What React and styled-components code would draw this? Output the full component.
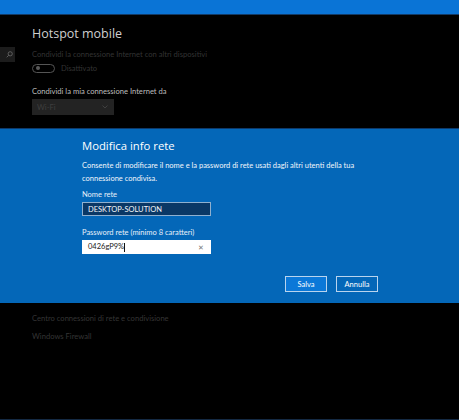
import React from "react";
import styled, { createGlobalStyle } from "styled-components";

const Globale = createGlobalStyle`
  html, body {
    margin: 0;
    padding: 0;
    background: #000000;
  }
  body {
    font-family: "Lato", "Open Sans", sans-serif;
  }
`;

const Pagina = styled.div`
  width: 459px;
  height: 420px;
  background: #000000;
  display: flex;
  flex-direction: column;
  overflow: hidden;
`;

const BarraSuperiore = styled.div`
  height: 14px;
  background: #0a74d6;
  border-bottom: 1px solid #123a66;
  flex-shrink: 0;
`;

const Impostazioni = styled.div`
  display: flex;
  height: 113px;
  flex-shrink: 0;
`;

const Laterale = styled.div`
  width: 32px;
  padding-top: 32px;
`;

const Ricerca = styled.div`
  width: 15px;
  height: 15px;
  background: #1c1c1c;
  display: flex;
  align-items: center;
  justify-content: flex-end;
  padding-right: 2px;
  box-sizing: border-box;
`;

const Principale = styled.div`
  display: flex;
  flex-direction: column;
`;

const Titolo = styled.h1`
  margin: 10px 0 0;
  font-family: "Open Sans", sans-serif;
  font-size: 12.5px;
  font-weight: 400;
  color: #cfcfcf;
  line-height: 17px;
`;

const Etichetta = styled.div`
  font-size: 7.6px;
  line-height: 10px;
  color: ${(p) => (p.$chiara ? "#bdbdbd" : "#333333")};
  margin-top: ${(p) => p.$sopra || 0}px;
`;

const RigaInterruttore = styled.div`
  display: flex;
  align-items: center;
  gap: 6px;
  margin-top: 4px;
`;

const Interruttore = styled.div`
  width: 18px;
  height: 7px;
  border: 1px solid #555555;
  border-radius: 5px;
  display: flex;
  align-items: center;
  padding-left: 3px;
  box-sizing: content-box;

  &::before {
    content: "";
    width: 4px;
    height: 4px;
    border-radius: 50%;
    background: #5a5a5a;
  }
`;

const Selettore = styled.div`
  width: 82px;
  height: 16px;
  margin-top: 3px;
  background: #232323;
  display: flex;
  align-items: center;
  justify-content: space-between;
  padding: 0 6px 0 5px;
  box-sizing: border-box;
  font-size: 7.6px;
  color: #3e3e3e;
`;

const Finestra = styled.div`
  height: 175px;
  background: #0467b8;
  border-top: 1px solid #0d3a6c;
  flex-shrink: 0;
  padding-left: 82px;
  box-sizing: border-box;
  display: flex;
  flex-direction: column;
`;

const TitoloFinestra = styled.h2`
  margin: 9px 0 0;
  font-family: "Open Sans", sans-serif;
  font-size: 11.3px;
  font-weight: 400;
  color: #ffffff;
  line-height: 16px;
`;

const Descrizione = styled.p`
  margin: 5px 0 0;
  width: 275px;
  font-size: 7.5px;
  line-height: 13px;
  color: #f2f6fb;
`;

const Campo = styled.div`
  margin-top: ${(p) => p.$sopra}px;
  display: flex;
  flex-direction: column;
  gap: 2px;
`;

const NomeCampo = styled.label`
  font-size: 7.5px;
  line-height: 10px;
  color: #e8f0f8;
`;

const Casella = styled.div`
  width: 129px;
  height: 14px;
  box-sizing: border-box;
  display: flex;
  align-items: center;
  justify-content: space-between;
  padding: 0 6px 0 5px;
  font-size: 7.5px;
  background: ${(p) => (p.$chiara ? "#ffffff" : "#0a3866")};
  color: ${(p) => (p.$chiara ? "#1a1a1a" : "#f4f7fb")};
  border: 1px solid ${(p) => (p.$chiara ? "#ffffff" : "#8fb0cf")};
`;

const Cursore = styled.span`
  display: inline-block;
  width: 1px;
  height: 9px;
  background: #111111;
  vertical-align: middle;
`;

const Chiudi = styled.span`
  color: #777777;
  font-size: 7px;
`;

const Pulsanti = styled.div`
  display: flex;
  gap: 9px;
  margin-top: 22px;
  margin-left: 203px;
`;

const Pulsante = styled.button`
  width: 42px;
  height: 16px;
  padding: 0;
  font-family: inherit;
  font-size: 7.5px;
  color: #ffffff;
  background: ${(p) => (p.$primario ? "#0b78d8" : "transparent")};
  border: 1px solid #b9d4ee;
`;

const Collegamenti = styled.div`
  display: flex;
  flex-direction: column;
  gap: 8px;
  padding: 10px 0 0 32px;
  flex: 1;
  border-bottom: 1px solid #142a44;
`;

const Collegamento = styled.div`
  font-size: 7.6px;
  line-height: 10px;
  color: #353535;
`;

function IconaRicerca() {
  return (
    <svg width="7" height="7" viewBox="0 0 10 10" fill="none">
      <circle cx="6" cy="4" r="3" stroke="#6a6a6a" strokeWidth="1.2" />
      <line x1="3.8" y1="6.2" x2="1" y2="9" stroke="#6a6a6a" strokeWidth="1.2" />
    </svg>
  );
}

function Freccia() {
  return (
    <svg width="6" height="4" viewBox="0 0 6 4" fill="none">
      <polyline points="0.5,0.5 3,3 5.5,0.5" stroke="#444444" strokeWidth="0.9" />
    </svg>
  );
}

export default function App() {
  return (
    <Pagina>
      <Globale />
      <BarraSuperiore />
      <Impostazioni>
        <Laterale>
          <Ricerca>
            <IconaRicerca />
          </Ricerca>
        </Laterale>
        <Principale>
          <Titolo>Hotspot mobile</Titolo>
          <Etichetta $sopra={7}>Condividi la connessione Internet con altri dispositivi</Etichetta>
          <RigaInterruttore>
            <Interruttore />
            <Etichetta>Disattivato</Etichetta>
          </RigaInterruttore>
          <Etichetta $chiara $sopra={13}>Condividi la mia connessione Internet da</Etichetta>
          <Selettore>
            <span>Wi-Fi</span>
            <Freccia />
          </Selettore>
        </Principale>
      </Impostazioni>
      <Finestra>
        <TitoloFinestra>Modifica info rete</TitoloFinestra>
        <Descrizione>
          Consente di modificare il nome e la password di rete usati dagli altri utenti della tua connessione condivisa.
        </Descrizione>
        <Campo $sopra={5}>
          <NomeCampo>Nome rete</NomeCampo>
          <Casella>DESKTOP-SOLUTION</Casella>
        </Campo>
        <Campo $sopra={12}>
          <NomeCampo>Password rete (minimo 8 caratteri)</NomeCampo>
          <Casella $chiara>
            <span>
              0426gP9%<Cursore />
            </span>
            <Chiudi>✕</Chiudi>
          </Casella>
        </Campo>
        <Pulsanti>
          <Pulsante $primario>Salva</Pulsante>
          <Pulsante>Annulla</Pulsante>
        </Pulsanti>
      </Finestra>
      <Collegamenti>
        <Collegamento>Centro connessioni di rete e condivisione</Collegamento>
        <Collegamento>Windows Firewall</Collegamento>
      </Collegamenti>
    </Pagina>
  );
}
